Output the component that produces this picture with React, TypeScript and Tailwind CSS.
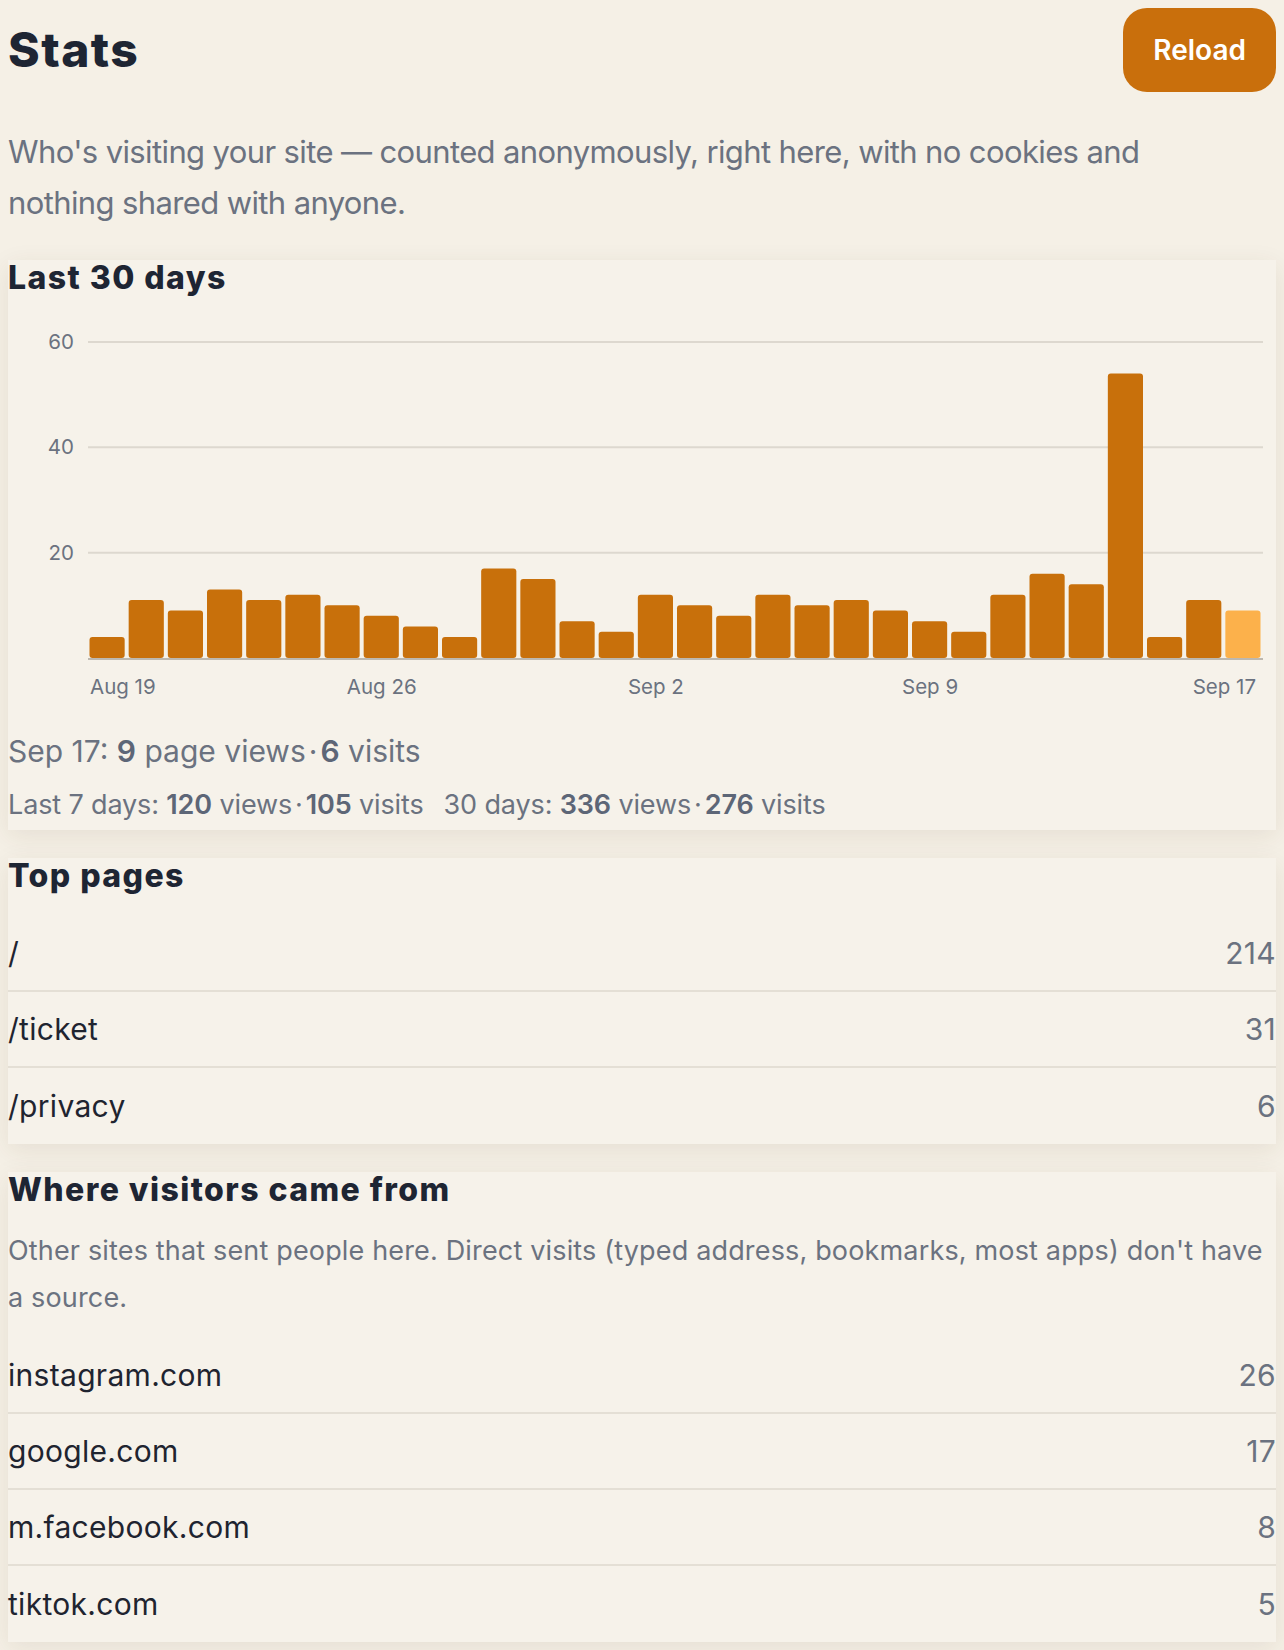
import React from "react";

const views = [4, 11, 9, 13, 11, 12, 10, 8, 6, 4, 17, 15, 7, 5, 12, 10, 8, 12, 10, 11, 9, 7, 5, 12, 16, 14, 54, 4, 11, 9];

const topPages = [
  { path: "/", count: 214 },
  { path: "/ticket", count: 31 },
  { path: "/privacy", count: 6 },
];

const referrers = [
  { host: "instagram.com", count: 26 },
  { host: "google.com", count: 17 },
  { host: "m.facebook.com", count: 8 },
  { host: "tiktok.com", count: 5 },
];

const FONT = "font-['Inter','Noto_Sans',sans-serif]";

function Chart() {
  // chart geometry, in px of the card
  const W = 1268;
  const H = 414;
  const left = 80;
  const right = 1255;
  const top = 46;
  const base = 362;
  const unit = (base - top) / 60;
  const slot = (right - left) / views.length;
  const ticks = [
    { i: 0, label: "Aug 19", anchor: "start" as const, x: 82 },
    { i: 7, label: "Aug 26", anchor: "middle" as const },
    { i: 14, label: "Sep 2", anchor: "middle" as const },
    { i: 21, label: "Sep 9", anchor: "middle" as const },
    { i: 29, label: "Sep 17", anchor: "end" as const, x: 1248 },
  ];

  return (
    <svg width="100%" height={H} viewBox={`0 0 ${W} ${H}`} className="block">
      {[60, 40, 20].map((v) => {
        const y = base - v * unit;
        return (
          <g key={v}>
            <line x1={left} x2={right} y1={y} y2={y} stroke="#ddd8cf" strokeWidth={2} />
            <text x={66} y={y + 7} textAnchor="end" fontSize={20.5} fill="#6b7280" fontFamily="Inter, sans-serif">
              {v}
            </text>
          </g>
        );
      })}
      {views.map((v, i) => {
        const h = v * unit;
        const x = left + i * slot + 1.5;
        return (
          <rect
            key={i}
            x={x}
            y={base - h}
            width={slot - 4}
            height={h}
            rx={3}
            fill={i === views.length - 1 ? "#fcb14b" : "#c8700b"}
          />
        );
      })}
      <line x1={left} x2={right} y1={base + 1} y2={base + 1} stroke="#bdb8b0" strokeWidth={2} />
      {ticks.map((t) => (
        <text
          key={t.label}
          x={t.x ?? left + (t.i + 0.5) * slot}
          y={398}
          textAnchor={t.anchor}
          fontSize={20.5}
          fill="#6b7280"
          fontFamily="Inter, sans-serif"
        >
          {t.label}
        </text>
      ))}
    </svg>
  );
}

function Card({ children, className = "" }: { children: React.ReactNode; className?: string }) {
  return (
    <section className={`bg-[#f6f2ea] shadow-[0_6px_24px_rgba(80,60,20,0.09)] ${className}`}>
      {children}
    </section>
  );
}

function Row({ label, count }: { label: string; count: number }) {
  return (
    <div className="flex items-center justify-between h-[76px] text-[30px] leading-[40px] tracking-[0.01em]">
      <span className="text-[#1f2430]">{label}</span>
      <span className="text-[#6b7280]">{count}</span>
    </div>
  );
}

function Dot() {
  return <span className="mx-[3px]">·</span>;
}

function Num({ children }: { children: React.ReactNode }) {
  return <b className="font-semibold text-[#5d6677]">{children}</b>;
}

export default function App() {
  return (
    <div className={`min-h-screen bg-[#f5f0e6] px-2 pt-2 pb-10 ${FONT}`}>
      <header className="flex items-center justify-between">
        <h1 className="text-[48px] font-extrabold text-[#1e2533] tracking-[0.03em]">Stats</h1>
        <button className="h-[84px] px-[30px] rounded-[24px] bg-[#c96f0c] text-white text-[28px] font-semibold">
          Reload
        </button>
      </header>

      <p className="mt-[34px] max-w-[1200px] text-[31px] leading-[51px] text-[#6b7280] tracking-[-0.02em]">
        Who's visiting your site — counted anonymously, right here, with no cookies and nothing shared with anyone.
      </p>

      <div className="mt-[32px] flex flex-col gap-[28px]">
        <Card className="pb-[5px]">
          <h2 className="text-[32px] leading-[36px] font-extrabold text-[#1e2533] tracking-[0.045em]">Last 30 days</h2>
          <Chart />
          <p className="mt-[19px] text-[30px] leading-[45px] text-[#6b7280]">
            Sep 17: <Num>9</Num> page views<Dot /><Num>6</Num> visits
          </p>
          <p className="mt-[11px] text-[27px] leading-[40px] text-[#6b7280] tracking-[-0.005em]">
            <span>
              Last 7 days: <Num>120</Num> views<Dot /><Num>105</Num> visits
            </span>
            <span className="ml-5">
              30 days: <Num>336</Num> views<Dot /><Num>276</Num> visits
            </span>
          </p>
        </Card>

        <Card>
          <h2 className="text-[32px] leading-[36px] font-extrabold text-[#1e2533] tracking-[0.045em]">Top pages</h2>
          <div className="mt-[22px] divide-y-2 divide-[#e4dfd5]">
            {topPages.map((p) => (
              <Row key={p.path} label={p.path} count={p.count} />
            ))}
          </div>
        </Card>

        <Card>
          <h2 className="text-[32px] leading-[36px] font-extrabold text-[#1e2533] tracking-[0.045em]">Where visitors came from</h2>
          <p className="mt-[19px] text-[27px] leading-[47px] text-[#6b7280] tracking-[0.006em]">
            Other sites that sent people here. Direct visits (typed address, bookmarks, most apps) don't have a source.
          </p>
          <div className="mt-[17px] divide-y-2 divide-[#e4dfd5]">
            {referrers.map((r) => (
              <Row key={r.host} label={r.host} count={r.count} />
            ))}
          </div>
        </Card>
      </div>
    </div>
  );
}
